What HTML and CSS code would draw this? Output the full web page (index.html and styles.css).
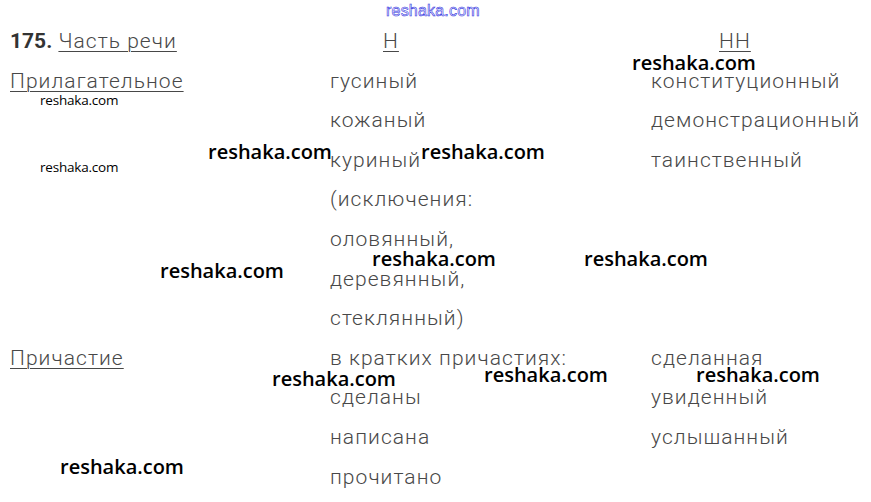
FILE: index.html
```html
<!DOCTYPE html>
<html lang="ru">
<head>
  <meta charset="UTF-8">
  <title>175. Часть речи</title>
  <link rel="stylesheet" href="styles.css">
</head>
<body>
  <div class="page">
    <div class="site">reshaka.com</div>
    <div class="table">
      <div class="cell"><b class="num">175.</b> <u>Часть речи</u></div>
      <div class="cell head-n"><u>Н</u></div>
      <div class="cell head-nn"><u>НН</u></div>

      <div class="cell"><u>Прилагательное</u></div>
      <div class="cell">гусиный</div>
      <div class="cell">конституционный</div>

      <div class="cell"></div>
      <div class="cell">кожаный</div>
      <div class="cell">демонстрационный</div>

      <div class="cell"></div>
      <div class="cell">куриный</div>
      <div class="cell">таинственный</div>

      <div class="cell"></div>
      <div class="cell">(исключения:</div>
      <div class="cell"></div>

      <div class="cell"></div>
      <div class="cell">оловянный,</div>
      <div class="cell"></div>

      <div class="cell"></div>
      <div class="cell">деревянный,</div>
      <div class="cell"></div>

      <div class="cell"></div>
      <div class="cell">стеклянный)</div>
      <div class="cell"></div>

      <div class="cell"><u>Причастие</u></div>
      <div class="cell">в кратких причастиях:</div>
      <div class="cell">сделанная</div>

      <div class="cell"></div>
      <div class="cell">сделаны</div>
      <div class="cell">увиденный</div>

      <div class="cell"></div>
      <div class="cell">написана</div>
      <div class="cell">услышанный</div>

      <div class="cell"></div>
      <div class="cell">прочитано</div>
      <div class="cell"></div>
    </div>

    <!-- водяные знаки поверх таблицы -->
    <span class="mark small" style="left:40px;top:91px">reshaka.com</span>
    <span class="mark small" style="left:40px;top:158px">reshaka.com</span>
    <span class="mark" style="left:632px;top:49px">reshaka.com</span>
    <span class="mark" style="left:208px;top:138px">reshaka.com</span>
    <span class="mark" style="left:421px;top:138px">reshaka.com</span>
    <span class="mark" style="left:160px;top:257px">reshaka.com</span>
    <span class="mark" style="left:372px;top:245px">reshaka.com</span>
    <span class="mark" style="left:584px;top:245px">reshaka.com</span>
    <span class="mark" style="left:272px;top:365px">reshaka.com</span>
    <span class="mark" style="left:484px;top:361px">reshaka.com</span>
    <span class="mark" style="left:696px;top:361px">reshaka.com</span>
    <span class="mark" style="left:60px;top:453px">reshaka.com</span>
  </div>
</body>
</html>
```

FILE: styles.css
```css
* {
  margin: 0;
  padding: 0;
}

body {
  background: #fff;
  font-family: "Roboto", "Liberation Sans", sans-serif;
  color: #484848;
}

.page {
  width: 871px;
  height: 502px;
  position: relative;
  overflow: hidden;
}

.site {
  height: 22px;
  padding-left: 386px;
  font-family: "Liberation Sans", sans-serif;
  font-size: 16px;
  line-height: 22px;
  color: #fff;
  -webkit-text-stroke: 0.6px #3030e0;
  letter-spacing: 0.2px;
}

.table {
  display: grid;
  grid-template-columns: 320px 321px 1fr;
  grid-auto-rows: 39.6px;
  padding-left: 10px;
  font-size: 21px;
  font-weight: 300;
  letter-spacing: 1.05px;
}

.cell {
  line-height: 39.6px;
  white-space: nowrap;
}

.cell u {
  text-decoration-thickness: 1px;
  text-underline-offset: 3px;
}

.num {
  font-weight: 700;
  letter-spacing: 0;
  color: #333;
}

.head-n {
  padding-left: 53px;
}

.head-nn {
  padding-left: 68px;
}

.mark {
  position: absolute;
  font-family: "Open Sans", sans-serif;
  font-weight: 600;
  font-size: 20px;
  line-height: 28px;
  letter-spacing: 0;
  color: #000;
  white-space: nowrap;
}

.mark.small {
  font-size: 13.5px;
  line-height: 18px;
  font-weight: 400;
  letter-spacing: -0.2px;
}
```
